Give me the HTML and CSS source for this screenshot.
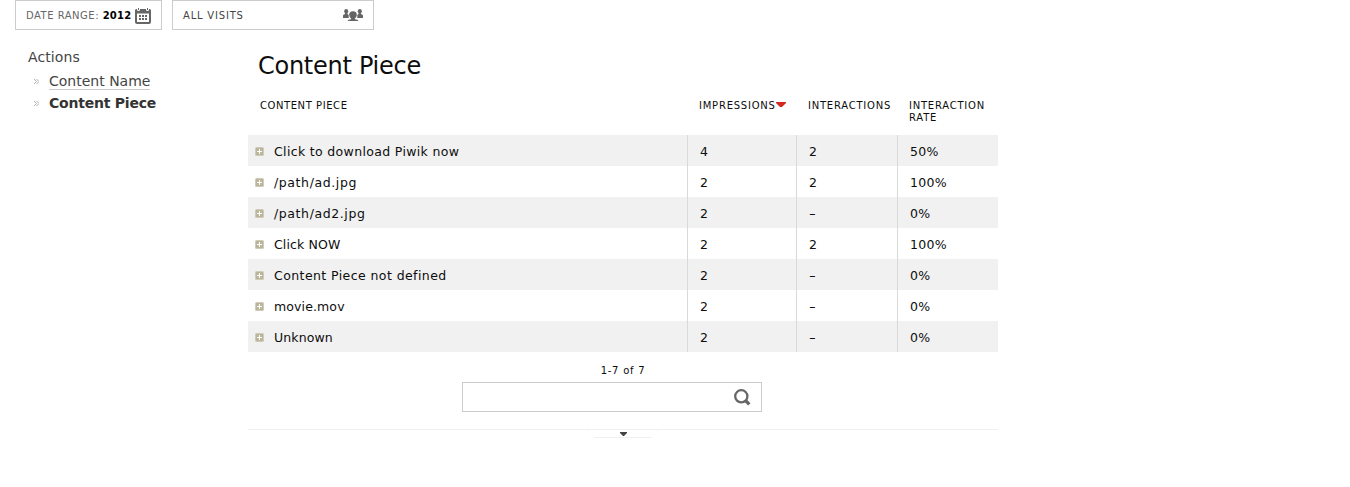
FILE: index.html
```html
<!DOCTYPE html>
<html lang="en">
<head>
<meta charset="utf-8">
<title>Content Piece</title>
<link rel="stylesheet" href="styles.css">
</head>
<body>
<svg width="0" height="0" class="defs">
  <symbol id="plus" viewBox="0 0 9 9"><rect width="9" height="9" rx="1.500" fill="#cfcbb8"/><rect x="1" y="1" width="7" height="7" fill="#bbb69b"/><path d="M2 4h5v1H2zM4 2h1v5H4z" fill="#fff"/></symbol>
  <symbol id="raquo" viewBox="0 0 5 5"><path d="M0 0l2.500 2.500L0 5M2.500 0L5 2.500L2.500 5" fill="none" stroke="#aaa" stroke-width=".9"/></symbol>
</svg>
<header class="top">
  <div class="selector date"><span class="caption">DATE RANGE: <b>2012</b></span>
    <svg width="16" height="16" viewBox="0 0 16 16"><path fill="#666" fill-rule="evenodd" d="M0 2L1 1h1v1q0 1 1.500 1T5 2V1h6v1q0 1 1.500 1T14 2V1h1l1 1v12q0 2-2 2H2q-2 0-2-2V2zM2 5.500v8q0 .5.500.5h11q.5 0 .5-.5v-8z"/><path fill="#666" d="M3 0h1v2H3zM12 0h1v2h-1zM4 7h2v2H4zM7 7h2v2H7zM10 7h2v2h-2zM4 10h2v2H4zM7 10h2v2H7zM10 10h2v2h-2z"/></svg>
  </div>
  <div class="selector segment"><span>ALL VISITS</span>
    <svg width="20" height="12" viewBox="0 0 20 12"><g fill="#666"><ellipse cx="3.200" cy="2.300" rx="2" ry="2.300"/><path d="M2 4h2.400v1L5.700 6v3H0V6.500q0-.8 2-1.500z"/><ellipse cx="16.800" cy="2.300" rx="2" ry="2.300"/><path d="M15.600 4H18v1q2 .7 2 1.500V9h-5.700V6l1.300-1z"/><path d="M10 2.300C7.500 2.300 6 3.800 6.200 6q.2 2.200 1.900 3.500v.7Q5 10.500 4.500 12h11q-.5-1.500-3.600-1.800v-.7q1.700-1.300 1.900-3.500C14 3.800 12.500 2.300 10 2.300z"/></g></svg>
  </div>
</header>
<div class="page">
  <nav class="menu">
    <h3>Actions</h3>
    <ul>
      <li><svg width="5" height="5"><use href="#raquo"/></svg><a class="link">Content Name</a></li>
      <li><svg width="5" height="5"><use href="#raquo"/></svg><a class="active">Content Piece</a></li>
    </ul>
  </nav>
  <main class="report">
    <h2>Content Piece</h2>
    <table>
      <colgroup><col class="c1"><col class="c2"><col class="c3"><col class="c4"></colgroup>
      <thead><tr><th class="name">CONTENT PIECE</th><th><span class="sorted">IMPRESSIONS<svg width="10" height="6" viewBox="0 0 10 6"><path d="M0 0h10v1L6 5H4L0 1z" fill="#d4291f"/></svg></span></th><th>INTERACTIONS</th><th>INTERACTION RATE</th></tr></thead>
      <tbody>
        <tr><td><svg width="9" height="9"><use href="#plus"/></svg><span class="mid">Click to download Piwik now</span></td><td>4</td><td>2</td><td>50%</td></tr>
        <tr><td><svg width="9" height="9"><use href="#plus"/></svg><span class="wide">/path/ad.jpg</span></td><td>2</td><td>2</td><td>100%</td></tr>
        <tr><td><svg width="9" height="9"><use href="#plus"/></svg><span class="wide">/path/ad2.jpg</span></td><td>2</td><td><span class="dash">-</span></td><td>0%</td></tr>
        <tr><td><svg width="9" height="9"><use href="#plus"/></svg><span class="tight">Click NOW</span></td><td>2</td><td>2</td><td>100%</td></tr>
        <tr><td><svg width="9" height="9"><use href="#plus"/></svg><span class="loose">Content Piece not defined</span></td><td>2</td><td><span class="dash">-</span></td><td>0%</td></tr>
        <tr><td><svg width="9" height="9"><use href="#plus"/></svg><span class="tight">movie.mov</span></td><td>2</td><td><span class="dash">-</span></td><td>0%</td></tr>
        <tr><td><svg width="9" height="9"><use href="#plus"/></svg><span class="tight">Unknown</span></td><td>2</td><td><span class="dash">-</span></td><td>0%</td></tr>
      </tbody>
    </table>
    <div class="pages">1-7 of 7</div>
    <div class="search"><svg width="17" height="17" viewBox="0 0 17 17" fill="none" stroke="#666"><circle cx="7.300" cy="7.300" r="6.100" stroke-width="2.300"/><path d="M11.500 11.500l3.800 3.800" stroke-width="3.300"/></svg></div>
    <footer class="foot"><div class="ticks"><div class="expand"><svg width="7" height="4" viewBox="0 0 7 4"><path d="M0 0h7v1L4 4H3L0 1z" fill="#444"/></svg></div></div></footer>
  </main>
</div>
</body>
</html>
```
FILE: styles.css
```css
body { margin: 0; background: #fff; color: #0d0d0d; font-family: "DejaVu Sans", Verdana, sans-serif; }
svg { display: block; flex: none; }
.defs { position: absolute; }
.top { display: flex; gap: 10px; padding-left: 15px; height: 30px; }
.selector { box-sizing: border-box; height: 30px; border: 1px solid #ccc; display: flex; align-items: center; justify-content: space-between; padding: 1px 10px 0; font-size: 10px; letter-spacing: .8px; color: #444; white-space: nowrap; }
.selector svg { margin-top: 0; }
.segment svg { margin-top: -2px; }
.date { width: 147px; color: #666; }
.caption { letter-spacing: .5px; }
.date b { color: #000; letter-spacing: .2px; }
.segment { width: 202px; }
.page { display: flex; }
.menu { width: 248px; box-sizing: border-box; padding: 17px 0 0 28px; font-size: 14px; color: #444; }
.menu h3 { margin: 0; font-size: 14px; font-weight: 400; line-height: 20px; letter-spacing: .1px; }
.menu ul { list-style: none; margin: 3px 0 0; padding: 0 0 0 6px; }
.menu li { display: flex; align-items: center; gap: 10px; height: 22px; white-space: nowrap; }
.menu a { line-height: 16px; }
.link { border-bottom: 1px solid #ccc; }
.active { font-weight: 700; color: #333; letter-spacing: -.22px; }
.report { width: 750px; padding-top: 21px; }
h2 { margin: 0; padding-left: 10px; font-size: 24px; font-weight: 400; line-height: 30px; letter-spacing: -.27px; }
table { width: 750px; margin-top: 12px; border-collapse: collapse; table-layout: fixed; }
.c1 { width: 439px; }
.c2 { width: 109px; }
.c3 { width: 101px; }
.c4 { width: 101px; }
th { height: 35px; padding: 7px 0 0 12px; vertical-align: top; text-align: left; font-size: 10px; line-height: 12px; font-weight: 400; letter-spacing: .77px; }
.name { letter-spacing: .57px; }
.sorted { display: flex; align-items: flex-start; }
.sorted svg { margin: 2px 0 0 0; }
td { box-sizing: border-box; height: 31px; padding: 2px 0 0 13px; font-size: 12.5px; line-height: 16px; letter-spacing: .3px; }
td + td { background-image: linear-gradient(#d9d9d9, #d9d9d9); background-size: 1px 100%; background-repeat: no-repeat; }
td:first-child { padding-left: 7px; }
td svg { display: inline-block; margin-right: 10px; vertical-align: 0; }
tbody tr:nth-child(odd) { background-color: #f1f1f1; }
.mid { letter-spacing: .34px; }
.wide { letter-spacing: .6px; }
.loose { letter-spacing: .42px; }
.tight { letter-spacing: .12px; }
.dash { display: inline-block; transform: scaleX(1.5); transform-origin: 0 50%; }
.pages { margin-top: 12px; font-size: 10px; line-height: 14px; text-align: center; letter-spacing: .75px; }
.search { box-sizing: border-box; width: 300px; height: 30px; margin: 4px 0 0 214px; border: 1px solid #ccc; display: flex; align-items: center; justify-content: flex-end; padding-right: 10px; }
.foot { margin-top: 17px; border-top: 1px solid #f0f0f0; display: flex; justify-content: center; }
.ticks { width: 68px; display: flex; justify-content: center; border: solid #f3f3f3; border-width: 0 1px; border-image: linear-gradient(#f3f3f3 2px, transparent 2px) 1; }
.expand { width: 58px; height: 7px; border-bottom: 1px solid #f0f0f0; display: flex; justify-content: center; align-items: center; }
```
